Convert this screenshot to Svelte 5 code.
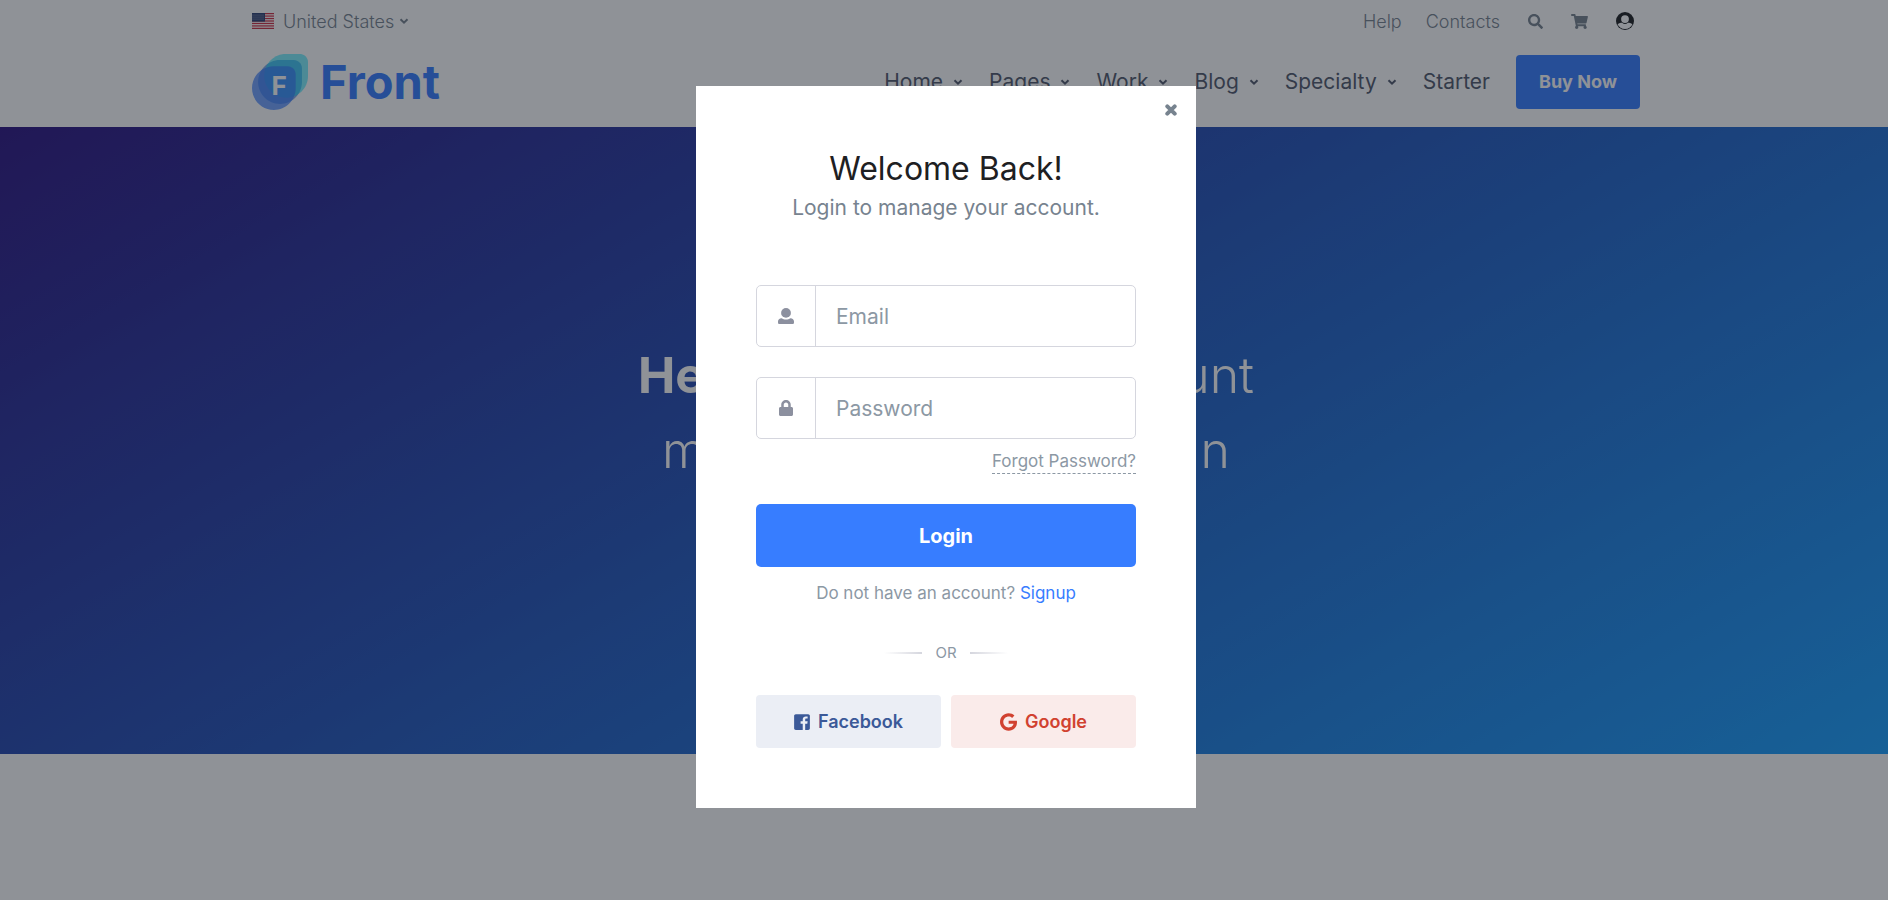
<script>
  const menu = [
    { label: 'Home', sub: true },
    { label: 'Pages', sub: true },
    { label: 'Work', sub: true },
    { label: 'Blog', sub: true },
    { label: 'Specialty', sub: true },
    { label: 'Starter', sub: false }
  ];
  const stripes = [0, 2, 4, 6, 8, 10, 12];
  const stars = [1, 3, 5, 7, 9, 11];
  const starRows = [1, 3, 5];
</script>

{#snippet chevron()}
  <svg class="chevron" viewBox="0 0 10 10" aria-hidden="true"><path d="M1.5 3.2 5 6.700 8.500 3.200" /></svg>
{/snippet}

<div class="page">
  <header>
    <div class="container">
      <div class="topbar">
        <button class="country" type="button">
          <svg class="flag" viewBox="0 0 22 16" aria-hidden="true">
            <rect width="22" height="16" fill="#fff" />
            {#each stripes as s}
              <rect y={(s * 16) / 13} width="22" height={16 / 13} fill="#d02f44" />
            {/each}
            <rect width="13" height="8.6" fill="#2f4273" />
            {#each starRows as y}
              {#each stars as x}
                <circle cx={x} cy={y + 1} r=".5" fill="#b9c0d3" />
              {/each}
            {/each}
          </svg>
          <span>United States</span>
          {@render chevron()}
        </button>
        <nav class="tools" aria-label="Utility">
          <a href="#help">Help</a>
          <a href="#contacts">Contacts</a>
          <button type="button" aria-label="Search">
            <svg width="15" height="15" viewBox="0 0 512 512"><path fill="currentColor" d="M505 442.7L405.3 343c-4.5-4.5-10.6-7-17-7H372c27.6-35.3 44-79.7 44-128C416 93.1 322.9 0 208 0S0 93.1 0 208s93.1 208 208 208c48.3 0 92.7-16.4 128-44v16.3c0 6.4 2.5 12.5 7 17l99.7 99.7c9.4 9.4 24.6 9.4 33.9 0l28.3-28.3c9.4-9.4 9.4-24.6.1-34zM208 336c-70.7 0-128-57.2-128-128 0-70.7 57.2-128 128-128 70.7 0 128 57.2 128 128 0 70.7-57.2 128-128 128z" /></svg>
          </button>
          <button type="button" aria-label="Cart">
            <svg width="17" height="15" viewBox="0 0 576 512"><path fill="currentColor" d="M528.12 301.319l47.273-208C578.806 78.301 567.391 64 551.99 64H159.208l-9.166-44.81C147.758 8.021 137.93 0 126.529 0H24C10.745 0 0 10.745 0 24v16c0 13.255 10.745 24 24 24h69.883l70.248 343.435C147.325 417.1 136 435.222 136 456c0 30.928 25.072 56 56 56s56-25.072 56-56c0-15.674-6.447-29.835-16.824-40h209.647C430.447 426.165 424 440.326 424 456c0 30.928 25.072 56 56 56s56-25.072 56-56c0-22.172-12.888-41.332-31.579-50.405l5.517-24.276c3.413-15.018-8.002-29.319-23.403-29.319H218.117l-6.545-32h293.145c11.206 0 20.92-7.754 23.403-18.681z" /></svg>
          </button>
          <button class="account" type="button" aria-label="Account">
            <svg width="18" height="18" viewBox="0 0 18 18">
              <circle cx="9" cy="9" r="9" fill="currentColor" />
              <path d="M1.6 12.200C3 10.900 5 10.800 6.100 10.800 7.800 12.400 10.200 12.400 11.900 10.800c1.100 0 3.100.1 4.500 1.400A8.100 8.100 0 0 1 1.600 12.200z" fill="#fff" />
              <circle cx="9" cy="7.100" r="3.900" fill="#fff" />
            </svg>
          </button>
        </nav>
      </div>
      <div class="mainbar">
        <a class="brand" href="#home">
          <svg width="56" height="56" viewBox="0 0 46 46" aria-hidden="true">
            <path fill="#3f7de0" opacity=".65" d="M23,41L23,41c-9.9,0-18-8-18-18v0c0-9.9,8-18,18-18h11.3C38,5,41,8,41,11.7V23C41,32.9,32.9,41,23,41z" />
            <path fill="#00dffc" opacity=".5" d="M28,35.9L28,35.9c-9.9,0-18-8-18-18v0c0-9.9,8-18,18-18l11.3,0C43,0,46,3,46,6.6V18C46,27.9,38,35.9,28,35.9z" />
            <path fill="#377dff" opacity=".7" d="M18,46L18,46C8,46,0,38,0,28v0c0-9.9,8-18,18-18h11.3c3.7,0,6.6,3,6.6,6.6V28C35.9,38,27.9,46,18,46z" />
            <text x="16" y="34" font-size="21.5" font-weight="700" fill="#fff">F</text>
          </svg>
          <span>Front</span>
        </a>
        <nav class="menu" aria-label="Main">
          {#each menu as item}
            <a href="#{item.label.toLowerCase()}">{item.label}{#if item.sub}{@render chevron()}{/if}</a>
          {/each}
          <a class="buy" href="#buy">Buy Now</a>
        </nav>
      </div>
    </div>
  </header>

  <section class="hero">
    <h1>
      <span class="line first"><b>He</b><span>unt</span></span>
      <span class="line second"><span>m</span><span>n</span></span>
    </h1>
  </section>
</div>

<div class="backdrop">
  <div class="modal" role="dialog" aria-modal="true" aria-labelledby="login-title">
    <button class="close" type="button" aria-label="Close">
      <svg width="12" height="12" viewBox="0 0 12 12"><path d="M2.3 2.3l7.4 7.4M9.7 2.3 2.3 9.7" /></svg>
    </button>
    <form>
      <h2 id="login-title">Welcome Back!</h2>
      <p class="lead">Login to manage your account.</p>

      <div class="field">
        <label for="email" aria-label="Email">
          <svg width="16" height="16" viewBox="0 0 16 16"><circle cx="8" cy="4.9" r="4.9" /><path d="M3.6 10.2c2.4 1.7 6.4 1.7 8.8 0 2.2 0 3.6 1.3 3.6 3.4v.8c0 1-.6 1.6-1.6 1.6H1.6C.6 16 0 15.4 0 14.4v-.8c0-2.1 1.4-3.4 3.6-3.4z" /></svg>
        </label>
        <input id="email" type="email" placeholder="Email" />
      </div>
      <div class="field">
        <label for="password" aria-label="Password">
          <svg width="14" height="16" viewBox="0 0 448 512"><path d="M400 224h-24v-72C376 68.2 307.8 0 224 0S72 68.2 72 152v72H48c-26.5 0-48 21.5-48 48v192c0 26.5 21.5 48 48 48h352c26.5 0 48-21.5 48-48V272c0-26.5-21.5-48-48-48zm-104 0H152v-72c0-39.7 32.3-72 72-72s72 32.3 72 72v72z" /></svg>
        </label>
        <input id="password" type="password" placeholder="Password" />
      </div>
      <div class="forgot"><a href="#forgot">Forgot Password?</a></div>

      <button class="login" type="submit">Login</button>
      <p class="signup">Do not have an account? <a href="#signup">Signup</a></p>

      <div class="divider"><span>OR</span></div>

      <div class="social">
        <button class="facebook" type="button">
          <svg width="16" height="18" viewBox="0 0 448 512" aria-hidden="true"><path fill="currentColor" d="M448 80v352c0 26.5-21.5 48-48 48h-85.3V302.8h60.6l8.7-67.6h-69.3V192c0-19.6 5.4-32.9 33.5-32.9H384V98.7c-6.2-.8-27.4-2.7-52.2-2.7-51.6 0-87 31.5-87 89.4v49.9H184v67.6h60.9V480H48c-26.5 0-48-21.5-48-48V80c0-26.5 21.5-48 48-48h352c26.5 0 48 21.5 48 48z" /></svg>
          Facebook
        </button>
        <button class="google" type="button">
          <svg width="17" height="18" viewBox="0 0 488 512" aria-hidden="true"><path fill="currentColor" d="M488 261.8C488 403.3 391.1 504 248 504 110.8 504 0 393.2 0 256S110.8 8 248 8c66.8 0 123 24.5 166.3 64.9l-67.5 64.9C258.5 52.6 94.3 116.6 94.3 256c0 86.5 69.1 156.6 153.7 156.6 98.2 0 135-70.4 140.8-106.9H248v-85.3h236.1c2.3 12.7 3.9 24.9 3.9 41.4z" /></svg>
          Google
        </button>
      </div>
    </form>
  </div>
</div>

<style>
  :global(body) {
    background: #fff;
    font-family: Inter, 'Open Sans', sans-serif;
    font-size: 17px;
  }
  * {
    box-sizing: border-box;
  }
  a {
    color: inherit;
    text-decoration: none;
  }
  button {
    padding: 0;
    border: 0;
    background: none;
    color: inherit;
    font: inherit;
    cursor: pointer;
  }
  svg {
    display: block;
    flex: none;
  }
  .container {
    max-width: 1388px;
    margin: 0 auto;
  }
  header {
    height: 127px;
    padding-left: 4px;
  }
  .topbar {
    display: flex;
    align-items: center;
    justify-content: space-between;
    height: 42px;
    color: #77838f;
    font-size: 18px;
    font-weight: 300;
  }
  .country {
    display: flex;
    align-items: center;
    gap: 9px;
  }
  .flag {
    width: 22px;
    height: 16px;
  }
  .chevron {
    width: 10px;
    height: 10px;
    fill: none;
    stroke: currentColor;
    stroke-width: 2;
  }
  .country .chevron {
    margin-left: -4px;
  }
  .tools {
    display: flex;
    align-items: center;
    gap: 28px;
    padding-right: 6px;
  }
  .tools a:first-child {
    margin-right: -4px;
  }
  .account {
    color: #1e2022;
  }
  .mainbar {
    display: flex;
    align-items: center;
    justify-content: space-between;
    height: 79px;
  }
  .brand {
    display: flex;
    align-items: center;
    gap: 12px;
    color: #377dff;
    font-size: 47px;
    font-weight: 700;
  }
  .menu {
    display: flex;
    align-items: center;
    gap: 26px;
    color: #51596c;
    font-size: 21px;
  }
  .menu a {
    display: flex;
    align-items: center;
    gap: 10px;
  }
  .menu .buy {
    justify-content: center;
    width: 124px;
    height: 54px;
    border-radius: 4px;
    background: #377dff;
    color: #fff;
    font-size: 18px;
    font-weight: 700;
  }
  .hero {
    display: flex;
    justify-content: center;
    padding: 211px 0 266px 4px;
    background: linear-gradient(150deg, #2d1582 0%, #19a0ff 100%);
  }
  h1 {
    display: flex;
    flex-direction: column;
    align-items: center;
    margin: 0;
    color: #fff;
    font-size: 50px;
    font-weight: 300;
    line-height: 75px;
  }
  b {
    font-weight: 700;
  }
  .line {
    display: flex;
    justify-content: space-between;
  }
  .first {
    width: 616px;
  }
  .second {
    width: 568px;
  }
  .backdrop {
    position: fixed;
    inset: 0;
    display: flex;
    align-items: flex-start;
    justify-content: center;
    padding: 86px 0 0 4px;
    background: rgba(21, 27, 38, 0.48);
  }
  .modal {
    position: relative;
    width: 500px;
    padding: 60px;
    background: #fff;
    color: #77838f;
  }
  .close {
    position: absolute;
    top: 18px;
    right: 19px;
  }
  .close path {
    stroke: #77838f;
    stroke-width: 4;
    stroke-linecap: round;
  }
  h2 {
    margin: 0;
    color: #1e2022;
    font-size: 32px;
    font-weight: 400;
    line-height: 45px;
    text-align: center;
  }
  .lead {
    margin: 0 0 61px;
    font-size: 21px;
    line-height: 33px;
    text-align: center;
  }
  .field {
    display: flex;
    height: 62px;
    margin-bottom: 30px;
    border: 1px solid #d5d6de;
    border-radius: 5px;
  }
  .field label {
    display: flex;
    flex: none;
    align-items: center;
    justify-content: center;
    width: 59px;
    border-right: 1px solid #d5d6de;
    fill: #8c909f;
  }
  .field input {
    flex: 1;
    min-width: 0;
    padding: 0 20px;
    border: 0;
    outline: 0;
    background: none;
    font: inherit;
    font-size: 21px;
  }
  .field input::placeholder {
    color: #8c98a4;
  }
  .forgot {
    display: flex;
    justify-content: flex-end;
    margin: -20px 0 30px;
  }
  .forgot a {
    border-bottom: 1px dashed #8c98a4;
    color: #8c98a4;
    line-height: 24px;
  }
  .login {
    width: 100%;
    height: 63px;
    border-radius: 5px;
    background: #377dff;
    color: #fff;
    font-size: 20px;
    font-weight: 700;
  }
  .signup {
    margin: 14px 0 36px;
    color: #8c98a4;
    line-height: 24px;
    text-align: center;
  }
  .signup a {
    color: #377dff;
  }
  .divider {
    display: flex;
    align-items: center;
    justify-content: center;
    gap: 13px;
    margin-bottom: 30px;
    color: #8c98a4;
    font-size: 15px;
    line-height: 24px;
  }
  .divider::before,
  .divider::after {
    width: 38px;
    height: 2px;
    background: linear-gradient(to right, #fff, #d5d6de);
    content: '';
  }
  .divider::after {
    background: linear-gradient(to left, #fff, #d5d6de);
  }
  .social {
    display: grid;
    grid-template-columns: 1fr 1fr;
    gap: 10px;
  }
  .social button {
    display: flex;
    align-items: center;
    justify-content: center;
    gap: 8px;
    height: 53px;
    border-radius: 4px;
    font-size: 18px;
    font-weight: 600;
  }
  .facebook {
    background: #ebeef5;
    color: #3b5998;
  }
  .google {
    background: #faebea;
    color: #d14130;
  }
</style>
